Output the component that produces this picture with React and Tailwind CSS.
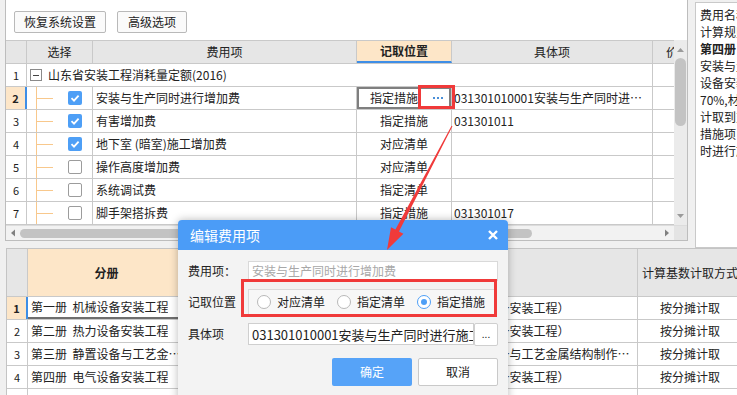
import React from 'react';

const topRows = [
  { n: 2, checked: true, name: '安装与生产同时进行增加费', pos: '指定措施', item: '031301010001安装与生产同时进行施工增加费', active: true },
  { n: 3, checked: true, name: '有害增加费', pos: '指定措施', item: '031301011' },
  { n: 4, checked: true, name: '地下室 (暗室)施工增加费', pos: '对应清单', item: '' },
  { n: 5, checked: false, name: '操作高度增加费', pos: '对应清单', item: '' },
  { n: 6, checked: false, name: '系统调试费', pos: '指定清单', item: '' },
  { n: 7, checked: false, name: '脚手架搭拆费', pos: '指定措施', item: '031301017' },
];

const bookRows = [
  { n: 1, book: '第一册  机械设备安装工程', range: '机械设备安装工程', scope: '（第一册  机械设备安装工程）' },
  { n: 2, book: '第二册  热力设备安装工程', range: '热力设备安装工程', scope: '（第二册  热力设备安装工程）' },
  { n: 3, book: '第三册  静置设备与工艺金属结构制作安装工程', range: '静置设备与工艺金属结构', scope: '（第三册  静置设备与工艺金属结构制作安装工程）' },
  { n: 4, book: '第四册  电气设备安装工程', range: '电气设备安装工程', scope: '（第四册  电气设备安装工程）' },
  { n: 5, book: '', range: '', scope: '' },
];

const noteLines = [
  { text: '费用名称：安装与生产同时进行增加费' },
  { text: '计算规则：' },
  { text: '第四册 电气设备安装工程', bold: true },
  { text: '安装与生产同时进行施工增加费按' },
  { text: '设备安装工程人工费的10%计取' },
  { text: '70%,材料费30%,' },
  { text: '计取到对应措施项目中' },
  { text: '措施项目：安装与生产同' },
  { text: '时进行施工增加费' },
];

function Checkbox({ checked }) {
  if (checked) {
    return (
      <div className="w-[14px] h-[14px] rounded-[2px] bg-[#4e9ff6] flex items-center justify-center">
        <svg width="10" height="10" viewBox="0 0 10 10">
          <path d="M1.5 5.2 L4 7.6 L8.6 2.6" fill="none" stroke="#fff" strokeWidth="1.8" />
        </svg>
      </div>
    );
  }
  return <div className="w-[14px] h-[14px] rounded-[2px] bg-white border border-[#9c9c9c]" />;
}

function TreeLines() {
  return (
    <svg width="30" height="22" className="shrink-0">
      <line x1="9.5" y1="0" x2="9.5" y2="22" stroke="#f8c88c" strokeWidth="1" />
      <line x1="9.5" y1="11.5" x2="26" y2="11.5" stroke="#f8c88c" strokeWidth="1" />
    </svg>
  );
}

function Radio({ checked, label }) {
  return (
    <div className="flex items-center gap-[6px] shrink-0 whitespace-nowrap">
      <div
        className={
          checked
            ? 'w-[14px] h-[14px] rounded-full border border-[#4e9ff6] bg-white flex items-center justify-center'
            : 'w-[14px] h-[14px] rounded-full border border-[#b8b8b8] bg-white'
        }
      >
        {checked && <div className="w-[6px] h-[6px] rounded-full bg-[#4e9ff6]" />}
      </div>
      <span>{label}</span>
    </div>
  );
}

export default function App() {
  return (
    <div className="relative w-[737px] h-[395px] overflow-hidden bg-[#f0f0f0] text-[12px] text-[#222] leading-none font-['Noto_Sans_CJK_SC',sans-serif]">
      {/* upper area */}
      <div className="flex h-[248px]">
        <div className="ml-[5px] w-[683px] h-[241px] bg-white border-x border-b border-[#bdbdbd] flex flex-col">
          {/* toolbar */}
          <div className="h-[40px] flex items-start gap-[11px] pl-[8px] pt-[11px]">
            <button className="h-[22px] px-[9px] rounded-[2px] border border-[#b9b9b9] bg-[#fafafa] text-[#222]">恢复系统设置</button>
            <button className="h-[22px] px-[10px] rounded-[2px] border border-[#b9b9b9] bg-[#fafafa] text-[#222]">高级选项</button>
          </div>

          {/* grid */}
          <div className="flex h-[185px]">
            <div className="w-[668px] overflow-hidden">
              <div className="w-[700px]">
                <div className="flex h-[24px] border-y border-[#c9c9c9] bg-[#e6e6e6]">
                  <div className="w-[21px] border-r border-[#c9c9c9]" />
                  <div className="w-[66px] border-r border-[#c9c9c9] flex items-center justify-center">选择</div>
                  <div className="w-[264px] border-r border-[#c9c9c9] flex items-center justify-center">费用项</div>
                  <div className="w-[95px] border-r border-[#c9c9c9] border-b-2 border-b-[#3e8ee6] bg-[#fde6c8] flex items-center justify-center font-bold">记取位置</div>
                  <div className="w-[201px] border-r border-[#c9c9c9] flex items-center justify-center">具体项</div>
                  <div className="w-[50px] flex items-center justify-center overflow-hidden">价格</div>
                </div>

                <div className="flex h-[23px] border-b border-[#c9c9c9]">
                  <div className="w-[21px] border-r border-[#c9c9c9] flex items-center justify-center text-[11px]">1</div>
                  <div className="w-[626px] border-r border-[#c9c9c9] flex items-center pl-[3px] gap-[6px]">
                    <div className="w-[12px] h-[12px] border border-[#8a8a8a] flex items-center justify-center">
                      <div className="w-[6px] h-px bg-[#444]" />
                    </div>
                    <span>山东省安装工程消耗量定额(2016)</span>
                  </div>
                  <div className="w-[50px]" />
                </div>

                {topRows.map((r) => (
                  <div key={r.n} className="flex h-[23px] border-b border-[#c9c9c9]">
                    <div
                      className={
                        r.active
                          ? 'w-[21px] border-r-2 border-[#3e8ee6] bg-[#fde6c8] flex items-center justify-center text-[11px] font-bold'
                          : 'w-[21px] border-r border-[#c9c9c9] flex items-center justify-center text-[11px]'
                      }
                    >
                      {r.n}
                    </div>
                    <div className="w-[66px] border-r border-[#c9c9c9] flex items-center">
                      <TreeLines />
                      <div className="ml-[11px]">
                        <Checkbox checked={r.checked} />
                      </div>
                    </div>
                    <div className="w-[264px] border-r border-[#c9c9c9] flex items-center pl-[3px]">{r.name}</div>
                    {r.active ? (
                      <div className="w-[95px] border-r border-[#c9c9c9] flex items-center shadow-[inset_0_0_0_2px_#7f7f7f]">
                        <span className="flex-1 text-center">{r.pos}</span>
                        <div className="w-[20px] flex gap-[2px] items-center pl-[2px]">
                          <div className="w-[2px] h-[2px] bg-[#4a8fd8]" />
                          <div className="w-[2px] h-[2px] bg-[#4a8fd8]" />
                          <div className="w-[2px] h-[2px] bg-[#4a8fd8]" />
                        </div>
                      </div>
                    ) : (
                      <div className="w-[95px] border-r border-[#c9c9c9] flex items-center justify-center">{r.pos}</div>
                    )}
                    <div className="w-[201px] border-r border-[#c9c9c9] flex items-center pl-[2px] pr-[2px] overflow-hidden">
                      <span className="truncate">{r.item}</span>
                    </div>
                    <div className="w-[50px]" />
                  </div>
                ))}
              </div>
            </div>

            {/* vertical scrollbar */}
            <div className="w-[13px] bg-[#ebebeb] flex flex-col items-center">
              <svg width="9" height="14" className="mt-[3px]">
                <path d="M1 9 L4.5 5 L8 9 Z" fill="#9a9a9a" />
              </svg>
              <div className="mt-[1px] w-[11px] h-[68px] rounded-full bg-[#c3c3c3]" />
              <div className="flex-1" />
              <svg width="9" height="14" className="mb-[2px]">
                <path d="M1 5 L4.5 9 L8 5 Z" fill="#9a9a9a" />
              </svg>
            </div>
          </div>

          {/* horizontal scrollbar */}
          <div className="flex h-[15px] border-t border-[#dcdcdc]">
            <div className="w-[668px] bg-[#f2f2f2] flex items-center">
              <svg width="14" height="14">
                <path d="M9 3.5 L5 7 L9 10.5 Z" fill="#808080" />
              </svg>
              <div className="w-[512px] h-[9px] rounded-full bg-[#c3c3c3]" />
              <div className="flex-1" />
              <svg width="14" height="14">
                <path d="M5 3.5 L9 7 L5 10.5 Z" fill="#808080" />
              </svg>
            </div>
            <div className="w-[13px] bg-[#e4e4e4]" />
          </div>
        </div>

        {/* notes panel */}
        <div className="ml-[7px] mt-[2px] flex-1 h-[246px] bg-white border border-r-0 border-[#c9c9c9] pl-[4px] pt-[3px] overflow-hidden">
          {noteLines.map((l, i) => (
            <div key={i} className={l.bold ? 'h-[17px] flex items-center whitespace-nowrap font-bold' : 'h-[17px] flex items-center whitespace-nowrap'}>
              {l.text}
            </div>
          ))}
        </div>
      </div>

      {/* lower table */}
      <div className="ml-[6px] w-[735px] border-l border-t border-[#c4c4c4] bg-white">
        <div className="flex h-[48px] border-b border-[#c9c9c9] bg-[#e6e6e6]">
          <div className="w-[21px] shrink-0 border-r border-[#c9c9c9]" />
          <div className="w-[158px] shrink-0 border-r border-[#c9c9c9] bg-[#fde6c8] flex items-center justify-center font-bold">分册</div>
          <div className="w-[219px] shrink-0 border-r border-[#c9c9c9] flex items-center justify-center">计算基数</div>
          <div className="w-[233px] shrink-0 border-r border-[#c9c9c9] flex items-center pl-[3px]">对应分册（专业）</div>
          <div className="w-[104px] shrink-0 flex items-center justify-center whitespace-nowrap">计算基数计取方式</div>
        </div>
        {bookRows.map((r) => (
          <div key={r.n} className="flex h-[23px] border-b border-[#c9c9c9]">
            <div
              className={
                r.n === 1
                  ? 'w-[21px] shrink-0 border-r-2 border-[#3e8ee6] bg-[#fde6c8] flex items-center justify-center text-[11px] font-bold'
                  : 'w-[21px] shrink-0 border-r border-[#c9c9c9] flex items-center justify-center text-[11px]'
              }
            >
              {r.n}
            </div>
            <div
              className={
                r.n === 1
                  ? 'w-[158px] shrink-0 border-r border-[#c9c9c9] border-b-2 border-b-[#6e6e6e] flex items-center pl-[3px] overflow-hidden'
                  : 'w-[158px] shrink-0 border-r border-[#c9c9c9] flex items-center pl-[3px] overflow-hidden'
              }
            >
              <span className="truncate whitespace-pre">{r.book}</span>
            </div>
            <div className="w-[219px] shrink-0 border-r border-[#c9c9c9] flex items-center pl-[3px] overflow-hidden">
              <span className="truncate">{r.range}</span>
            </div>
            <div className="w-[233px] shrink-0 border-r border-[#c9c9c9] flex items-center pl-[3px] pr-[4px] overflow-hidden">
              <span className="truncate whitespace-pre">{r.scope}</span>
            </div>
            <div className="w-[104px] shrink-0 flex items-center justify-center">{r.book ? '按分摊计取' : ''}</div>
          </div>
        ))}
      </div>

      {/* dialog */}
      <div className="absolute left-[178px] top-[220px] w-[330px] h-[190px] rounded-t-[4px] bg-[#f3f3f3] shadow-[0_0_8px_rgba(0,0,0,0.28)]">
        <div className="h-[30px] rounded-t-[4px] bg-[#4b9cf7] flex items-center justify-between pl-[12px] pr-[10px]">
          <span className="text-white text-[14px]">编辑费用项</span>
          <svg width="10" height="10" viewBox="0 0 10 10">
            <path d="M1 1 L9 9 M9 1 L1 9" stroke="#fff" strokeWidth="2.4" />
          </svg>
        </div>
        <div className="flex flex-col pt-[11px] px-[10px]">
          <div className="flex h-[20px] items-center">
            <span className="w-[60px] shrink-0">费用项：</span>
            <div className="flex-1 h-full border border-[#d9d9d9] bg-white flex items-center pl-[3px] text-[#a8a8a8] whitespace-nowrap">安装与生产同时进行增加费</div>
          </div>
          <div className="mt-[8px] flex h-[26px] items-center">
            <span className="w-[60px] shrink-0">记取位置</span>
            <div className="flex-1 h-full mr-[2px] border border-[#dadada] bg-[#f7f7f7] flex items-center gap-[12px] pl-[8px]">
              <Radio label="对应清单" />
              <Radio label="指定清单" />
              <Radio label="指定措施" checked />
            </div>
          </div>
          <div className="mt-[8px] flex h-[22px] items-center">
            <span className="w-[60px] shrink-0">具体项</span>
            <div className="w-[226px] shrink-0 h-full border border-[#cfcfcf] bg-white flex items-center pl-[3px] overflow-hidden whitespace-nowrap text-[13px]">
              031301010001安装与生产同时进行施工增加费
            </div>
            <div className="w-[24px] shrink-0 h-[23px] border border-[#cfcfcf] bg-white rounded-[2px] flex items-end justify-center pb-[6px] text-[10px]">...</div>
          </div>
          <div className="mt-[13px] flex justify-end gap-[6px]">
            <div className="w-[80px] h-[28px] rounded-[2px] bg-[#56a3f8] text-white flex items-center justify-center">确定</div>
            <div className="w-[80px] h-[28px] rounded-[2px] border border-[#c9c9c9] bg-white flex items-center justify-center">取消</div>
          </div>
        </div>
        {/* annotation box */}
        <div className="absolute left-[63px] top-[59px] w-[256px] h-[38px] border-[3px] border-[#f03a3a]" />
      </div>

      {/* annotation on cell */}
      <div className="absolute left-[418px] top-[85px] w-[37px] h-[24px] border-[3px] border-[#f03a3a]" />

      {/* annotation arrow */}
      <svg className="absolute left-0 top-0 pointer-events-none" width="737" height="395">
        <polygon
          points="451.56,125.77 452.44,126.23 398.97,231.43 403.4,233.75 387,250 391,227.25 395.43,229.57"
          fill="#f03a3a"
        />
      </svg>
    </div>
  );
}
